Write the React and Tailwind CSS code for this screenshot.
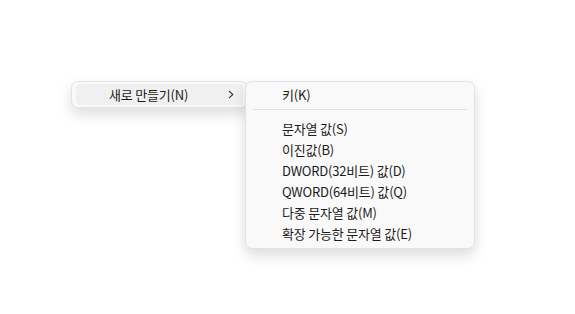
import React from "react";

const font = { fontFamily: '"Noto Sans CJK KR", "Noto Sans", sans-serif' };

function Item({ children }) {
  return (
    <div className="h-[21px] flex items-center pl-[32px] rounded-[4px] text-[13px] text-[#1b1b1b] leading-none tracking-[-0.2px]">
      {children}
    </div>
  );
}

export default function App() {
  const items = [
    "문자열 값(S)",
    "이진값(B)",
    "DWORD(32비트) 값(D)",
    "QWORD(64비트) 값(Q)",
    "다중 문자열 값(M)",
    "확장 가능한 문자열 값(E)",
  ];
  return (
    <div className="relative w-[575px] h-[314px] bg-white overflow-hidden" style={font}>
      <div className="absolute left-[71px] top-[81px] w-[177px] bg-[#f9f9f9] border border-[#e3e3e3] rounded-[7px] p-[2px_4px] shadow-[0_6px_14px_rgba(0,0,0,0.14)]">
        <div className="h-[21px] flex items-center justify-between pl-[33px] pr-[9px] rounded-[4px] bg-[#f0f0f0] text-[13px] text-[#1b1b1b] leading-none tracking-[-0.2px]">
          <span>새로 만들기(N)</span>
          <svg width="6" height="9" viewBox="0 0 6 9" fill="none">
            <path d="M1 0.8 L4.8 4.5 L1 8.2" stroke="#333" strokeWidth="1.1" />
          </svg>
        </div>
      </div>
      <div className="absolute left-[245px] top-[81px] w-[230px] bg-[#f9f9f9] border border-[#e3e3e3] rounded-[7px] pt-[2px] pb-[4px] px-[4px] shadow-[0_6px_14px_rgba(0,0,0,0.14)]">
        <Item>키(K)</Item>
        <div className="mt-[4px] mb-[8px] mx-[3px] h-px bg-[#e0e0e0]" />
        {items.map((t) => (
          <Item key={t}>{t}</Item>
        ))}
      </div>
    </div>
  );
}
